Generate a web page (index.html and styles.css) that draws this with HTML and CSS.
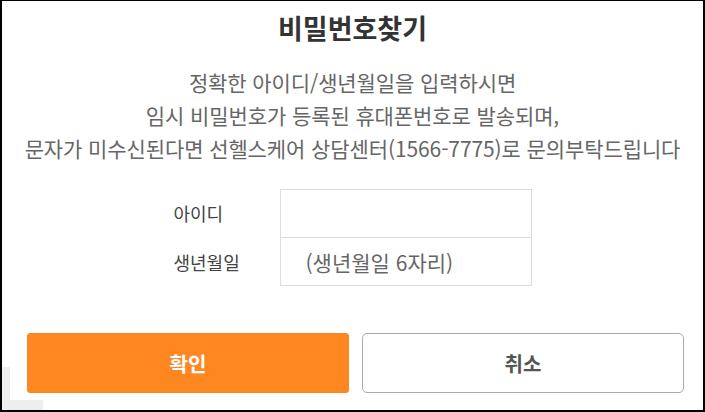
FILE: index.html
```html
<!DOCTYPE html>
<html lang="ko">
<head>
<meta charset="utf-8">
<title>비밀번호찾기</title>
<link rel="stylesheet" href="styles.css">
</head>
<body>
<div class="dialog">
  <h1 class="title">비밀번호찾기</h1>
  <p class="desc">정확한 아이디/생년월일을 입력하시면<br>임시 비밀번호가 등록된 휴대폰번호로 발송되며,<br>문자가 미수신된다면 선헬스케어 상담센터(1566-7775)로 문의부탁드립니다</p>
  <div class="form">
    <label class="label" for="uid">아이디</label>
    <input class="field" id="uid" type="text">
    <label class="label" for="birth">생년월일</label>
    <input class="field field-last" id="birth" type="text" placeholder="(생년월일 6자리)">
  </div>
  <div class="actions">
    <button class="btn btn-ok" type="button">확인</button>
    <button class="btn btn-cancel" type="button">취소</button>
  </div>
  <div class="corner"></div>
</div>
</body>
</html>
```
FILE: styles.css
```css
html, body {
  margin: 0;
  padding: 0;
  background: #fff;
}
.dialog {
  position: relative;
  width: 705px;
  height: 412px;
  box-sizing: border-box;
  border-left: 2px solid #000;
  border-top: 1px solid #000;
  border-right: 2px solid #000;
  border-bottom: 2px solid #000;
  background: #fff;
  font-family: "Noto Sans CJK KR", "Noto Sans", sans-serif;
  display: flex;
  flex-direction: column;
  align-items: center;
  overflow: hidden;
}
.title {
  margin: 9px 0 0;
  font-size: 27px;
  line-height: 36px;
  font-weight: 700;
  color: #333;
}
.desc {
  margin: 20px 0 0;
  font-size: 21px;
  line-height: 33px;
  color: #666;
  text-align: center;
  white-space: nowrap;
  letter-spacing: -0.1px;
}
.form {
  margin-top: 24px;
  display: grid;
  grid-template-columns: 106px 252px;
  align-items: center;
}
.label {
  font-size: 18px;
  color: #444;
}
.field {
  height: 48px;
  box-sizing: border-box;
  width: 252px;
  margin: 0;
  border: 1px solid #ddd;
  border-bottom: none;
  padding: 0 0 0 25px;
  font-family: inherit;
  font-size: 21px;
  color: #333;
  outline: none;
  background: #fff;
}
.field-last {
  border-bottom: 1px solid #ddd;
  height: 49px;
}
.field::placeholder {
  color: #666;
}
.actions {
  align-self: flex-start;
  margin: 47px 0 0 25px;
  display: flex;
  gap: 13px;
}
.btn {
  width: 322px;
  height: 60px;
  box-sizing: border-box;
  font-family: inherit;
  font-size: 20px;
  font-weight: 700;
  cursor: pointer;
}
.btn-ok {
  background: #fe8722;
  border: 1px solid #fb8420;
  border-radius: 3px;
  color: #fff;
}
.btn-cancel {
  background: #fff;
  border: 1px solid #aaa;
  border-radius: 5px;
  color: #555;
}
.corner {
  position: absolute;
  left: 0;
  bottom: 0;
  width: 41px;
  height: 43px;
  box-sizing: border-box;
  border-left: 8px solid #eee;
  border-bottom: 10px solid #eee;
  z-index: 0;
}
```
